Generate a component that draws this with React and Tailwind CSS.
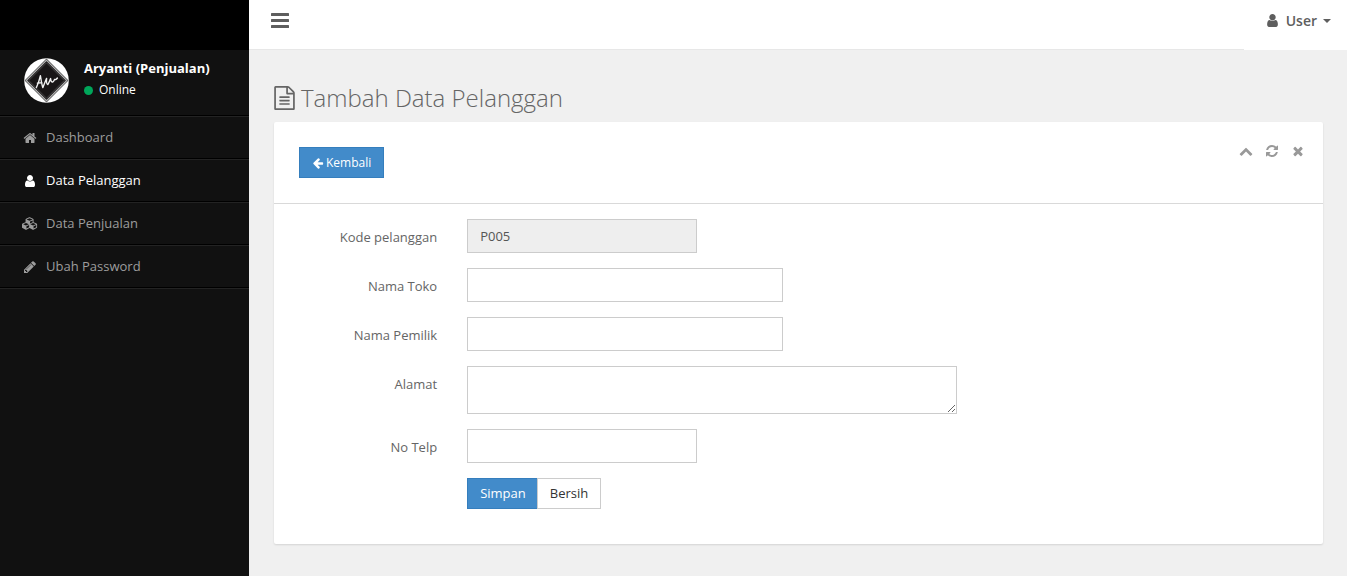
import React from "react";

const ICONS = {
  home: "M1472 992v480q0 26-19 45t-45 19h-384v-384h-256v384h-384q-26 0-45-19t-19-45v-480q0-1 .5-3t.5-3l575-474 575 474q1 2 1 6zm223-69l-62 74q-8 9-21 11h-3q-13 0-21-7l-692-577-692 577q-12 8-24 7-13-2-21-11l-62-74q-8-10-7-23.5t11-21.5l719-599q32-26 76-26t76 26l244 204v-195q0-14 9-23t23-9h192q14 0 23 9t9 23v408l219 182q10 8 11 21.5t-7 23.5z",
  user: "M1536 1399q0 109-62.5 187t-150.5 78h-854q-88 0-150.5-78t-62.5-187q0-85 8.5-160.5t31.5-152 58.5-131 94-89 134.5-34.5q131 128 313 128t313-128q76 0 134.5 34.5t94 89 58.5 131 31.5 152 8.5 160.5zm-256-887q0 159-112.5 271.5t-271.5 112.5-271.5-112.5-112.5-271.5 112.5-271.5 271.5-112.5 271.5 112.5 112.5 271.5z",
  cubes: "M640 1632l384-192v-314l-384 164v342zm-64-454l404-173-404-173-404 173zm1088 454l384-192v-314l-384 164v342zm-64-454l404-173-404-173-404 173zm-448-293l384-165v-266l-384 164v267zm-64-379l441-189-441-189-441 189zm1088 518v416q0 36-19 67t-52 47l-448 224q-25 14-57 14t-57-14l-448-224q-4-2-7-4-2 2-7 4l-448 224q-25 14-57 14t-57-14l-448-224q-33-16-52-47t-19-67v-416q0-38 21.5-70t56.5-48l434-186v-400q0-38 21.5-70t56.5-48l448-192q23-10 50-10t50 10l448 192q35 16 56.5 48t21.5 70v400l434 186q36 16 57 48t21 70z",
  pencil: "M491 1536l91-91-235-235-91 91v107h128v128h107zm523-928q0-22-22-22-10 0-17 7l-542 542q-7 7-7 17 0 22 22 22 10 0 17-7l542-542q7-7 7-17zm-54-192l416 416-832 832h-416v-416zm683 96q0 53-37 90l-166 166-416-416 166-165q36-38 90-38 53 0 91 38l235 234q37 39 37 91z",
  times: "M1490 1322q0 40-28 68l-136 136q-28 28-68 28t-68-28l-294-294-294 294q-28 28-68 28t-68-28l-136-136q-28-28-28-68t28-68l294-294-294-294q-28-28-28-68t28-68l136-136q28-28 68-28t68 28l294 294 294-294q28-28 68-28t68 28l136 136q28 28 28 68t-28 68l-294 294 294 294q28 28 28 68z",
  chevronUp: "M1683 1331l-166 165q-19 19-45 19t-45-19l-531-531-531 531q-19 19-45 19t-45-19l-166-165q-19-19-19-45.5t19-45.5l742-741q19-19 45-19t45 19l742 741q19 19 19 45.5t-19 45.5z",
  refresh: "M1639 1056q0 5-1 7-64 268-268 434.5t-478 166.5q-146 0-282.5-55t-243.5-157l-129 129q-19 19-45 19t-45-19-19-45v-448q0-26 19-45t45-19h448q26 0 45 19t19 45-19 45l-137 137q71 66 161 102t187 36q134 0 250-65t186-179q11-17 53-117 8-23 30-23h192q13 0 22.5 9.5t9.5 22.5zm25-800v448q0 26-19 45t-45 19h-448q-26 0-45-19t-19-45 19-45l138-138q-148-137-349-137-134 0-250 65t-186 179q-11 17-53 117-8 23-30 23h-199q-13 0-22.5-9.5t-9.5-22.5v-7q65-268 270-434.5t480-166.5q146 0 284 55.5t245 156.5l130-129q19-19 45-19t45 19 19 45z",
  arrowLeft: "M1664 896v128q0 53-32.5 90.5t-84.5 37.5h-704l293 294q38 36 38 90t-38 90l-75 76q-37 37-90 37-52 0-91-37l-651-652q-37-37-37-90 0-52 37-91l651-650q38-38 91-38 52 0 90 38l75 74q38 38 38 91t-38 91l-293 293h704q52 0 84.5 37.5t32.5 90.5z",
  fileText: "M1596 380q28 28 48 76t20 88v1152q0 40-28 68t-68 28h-1344q-40 0-68-28t-28-68v-1600q0-40 28-68t68-28h896q40 0 88 20t76 48zm-444-244v376h376q-10-29-22-41l-313-313q-12-12-41-22zm384 1528v-1024h-416q-40 0-68-28t-28-68v-416h-768v1536h1280zm-1024-864q0-14 9-23t23-9h704q14 0 23 9t9 23v64q0 14-9 23t-23 9h-704q-14 0-23-9t-9-23v-64zm736 224q14 0 23 9t9 23v64q0 14-9 23t-23 9h-704q-14 0-23-9t-9-23v-64q0-14 9-23t23-9h704zm0 256q14 0 23 9t9 23v64q0 14-9 23t-23 9h-704q-14 0-23-9t-9-23v-64q0-14 9-23t23-9h704z",
};

function Icon({ name, className, viewBox = "0 0 1792 1792" }) {
  return (
    <svg viewBox={viewBox} fill="currentColor" aria-hidden="true" className={className}>
      <path d={ICONS[name]} />
    </svg>
  );
}

function Logo() {
  return (
    <svg viewBox="0 0 45 45" className="size-[45px] shrink-0" role="img" aria-label="Logo">
      <circle cx="22.5" cy="22.5" r="22.3" fill="#fff" />
      <path d="M22.5 0.5L44.5 22.5L22.5 44.5L0.5 22.5Z" fill="#555" />
      <path d="M22.5 2.3L42.7 22.5L22.5 42.7L2.3 22.5Z" fill="#181516" stroke="#b4b4b4" strokeWidth="1.1" />
      <path d="M22.5 4.8L40.2 22.5L22.5 40.2L4.8 22.5Z" fill="#181516" stroke="#777" strokeWidth="0.5" />
      <path
        d="M12.4 29.5C14 26 15.4 22 16.4 17.6C17 21 17.6 26 18.8 29.6M13.4 25.2C15 24.8 16.4 24.8 18 25M18.8 29.6C20.4 26 21.4 23 22.6 20.4C22.4 23 22.6 26.4 23.8 26.6C25.2 24.6 25.8 22.2 26.6 20.6C26.8 22.8 27.6 24.4 28.8 24C29.8 23.4 30 22.4 30.6 21.4C31.4 22 32.4 21.4 33.4 20"
        fill="none"
        stroke="#f2f2f2"
        strokeWidth="1.4"
        strokeLinecap="round"
        strokeLinejoin="round"
      />
    </svg>
  );
}

const NAV = [
  { label: "Dashboard", icon: "home" },
  { label: "Data Pelanggan", icon: "user", active: true },
  { label: "Data Penjualan", icon: "cubes", viewBox: "0 0 2304 1792", size: "h-[13px] w-4" },
  { label: "Ubah Password", icon: "pencil" },
];

function Sidebar() {
  return (
    <aside className="w-[249px] shrink-0 bg-[#111]">
      <div className="h-[50px] bg-black" />
      <div className="flex h-[66px] gap-[15px] border-b border-black pl-6 pt-2">
        <Logo />
        <div className="text-white">
          <p className="text-[13px] font-bold leading-[21px]">Aryanti (Penjualan)</p>
          <p className="flex items-center gap-[6px] text-[12px] leading-[22px]">
            <span className="size-[9px] rounded-full bg-[#00a65a]" />
            Online
          </p>
        </div>
      </div>
      <nav>
        <ul className="border-b border-[#232323]">
          {NAV.map((item) => (
            <li key={item.label} className="border-b border-t border-b-black border-t-[#232323]">
              <a
                href="#"
                className={`flex h-[41px] items-center gap-2 pl-[22px] text-[13px] ${
                  item.active ? "text-white" : "text-[#9d9d9d]"
                }`}
              >
                <span className="flex w-4 justify-center">
                  <Icon name={item.icon} viewBox={item.viewBox} className={item.size || "size-[14px]"} />
                </span>
                {item.label}
              </a>
            </li>
          ))}
        </ul>
      </nav>
    </aside>
  );
}

function Topbar() {
  return (
    <header className="flex h-[50px] bg-white">
      <div className="flex-1 border-b border-[#e7e7e7] pl-[22px] pt-[13px]">
        <button type="button" aria-label="Toggle navigation" className="block text-[#5e5e5e]">
          <svg viewBox="0 0 18 15" fill="currentColor" className="h-[15px] w-[18px]">
            <rect width="18" height="3" rx="0.6" />
            <rect y="6" width="18" height="3" rx="0.6" />
            <rect y="12" width="18" height="3" rx="0.6" />
          </svg>
        </button>
      </div>
      <button
        type="button"
        className="flex h-[41px] w-[103px] items-center justify-end pr-4 text-[14px] font-semibold text-[#5e5e5e]"
      >
        <Icon name="user" className="mr-[6px] size-[15px]" />
        User
        <svg viewBox="0 0 8 4" fill="currentColor" className="ml-[6px] h-1 w-2" aria-hidden="true">
          <path d="M0 0h8L4 4z" />
        </svg>
      </button>
    </header>
  );
}

function Field({ id, label, width, children }) {
  return (
    <div className="mb-[15px] flex">
      <label htmlFor={id} className="w-2/12 pr-[15px] pt-[9px] text-right leading-[18px]">
        {label}
      </label>
      <div className={`px-[15px] ${width}`}>{children}</div>
    </div>
  );
}

const INPUT = "block w-full border border-[#ccc] px-3 text-[13px] text-[#555]";

export default function App() {
  return (
    <div className="flex min-h-screen bg-[#f0f0f0] font-['Open_Sans',sans-serif] text-[13px] text-[#656565]">
      <Sidebar />
      <div className="min-w-0 flex-1">
        <Topbar />
        <main className="pb-8 pl-[25px] pr-6 pt-[30px]">
          <h1 className="flex h-[42px] items-center gap-[6px] pb-[6px] text-[24px] font-light">
            <Icon name="fileText" viewBox="128 0 1536 1792" className="h-6 w-[21px]" />
            Tambah Data Pelanggan
          </h1>
          <section className="rounded-[2px] bg-white pb-5 shadow-[0_1px_2px_rgba(0,0,0,0.12)]">
            <div className="flex h-[82px] items-start justify-between border-b border-[#d9d9d9] pl-[25px] pr-[18px]">
              <a
                href="#"
                className="mt-[25px] flex h-[31px] items-center gap-[2px] border border-[#357ebd] bg-[#428bca] px-3 text-[12px] text-white"
              >
                <Icon name="arrowLeft" className="size-3" />
                Kembali
              </a>
              <div className="flex items-center gap-3 pt-[22px] text-[#999]">
                <button type="button" aria-label="Collapse">
                  <Icon name="chevronUp" className="size-[14px]" />
                </button>
                <button type="button" aria-label="Refresh">
                  <Icon name="refresh" className="size-[14px]" />
                </button>
                <button type="button" aria-label="Close">
                  <Icon name="times" className="size-[14px]" />
                </button>
              </div>
            </div>
            <form className="px-[5px] pt-[15px]" onSubmit={(e) => e.preventDefault()}>
              <Field id="kode" label="Kode pelanggan" width="w-3/12">
                <input id="kode" readOnly defaultValue="P005" className={`${INPUT} h-[34px] bg-[#eee]`} />
              </Field>
              <Field id="toko" label="Nama Toko" width="w-4/12">
                <input id="toko" className={`${INPUT} h-[34px]`} />
              </Field>
              <Field id="pemilik" label="Nama Pemilik" width="w-4/12">
                <input id="pemilik" className={`${INPUT} h-[34px]`} />
              </Field>
              <Field id="alamat" label="Alamat" width="w-6/12">
                <textarea id="alamat" className={`${INPUT} h-12 resize py-[6px]`} />
              </Field>
              <Field id="telp" label="No Telp" width="w-3/12">
                <input id="telp" type="tel" className={`${INPUT} h-[34px]`} />
              </Field>
              <div className="mb-[15px] ml-[16.6667%] flex px-[15px]">
                <button
                  type="submit"
                  className="h-[31px] border border-r-0 border-[#357ebd] bg-[#428bca] pl-3 pr-[11px] text-[13px] text-white"
                >
                  Simpan
                </button>
                <button
                  type="reset"
                  className="h-[31px] border border-[#ccc] bg-white px-3 text-[13px] text-[#333]"
                >
                  Bersih
                </button>
              </div>
            </form>
          </section>
        </main>
      </div>
    </div>
  );
}
